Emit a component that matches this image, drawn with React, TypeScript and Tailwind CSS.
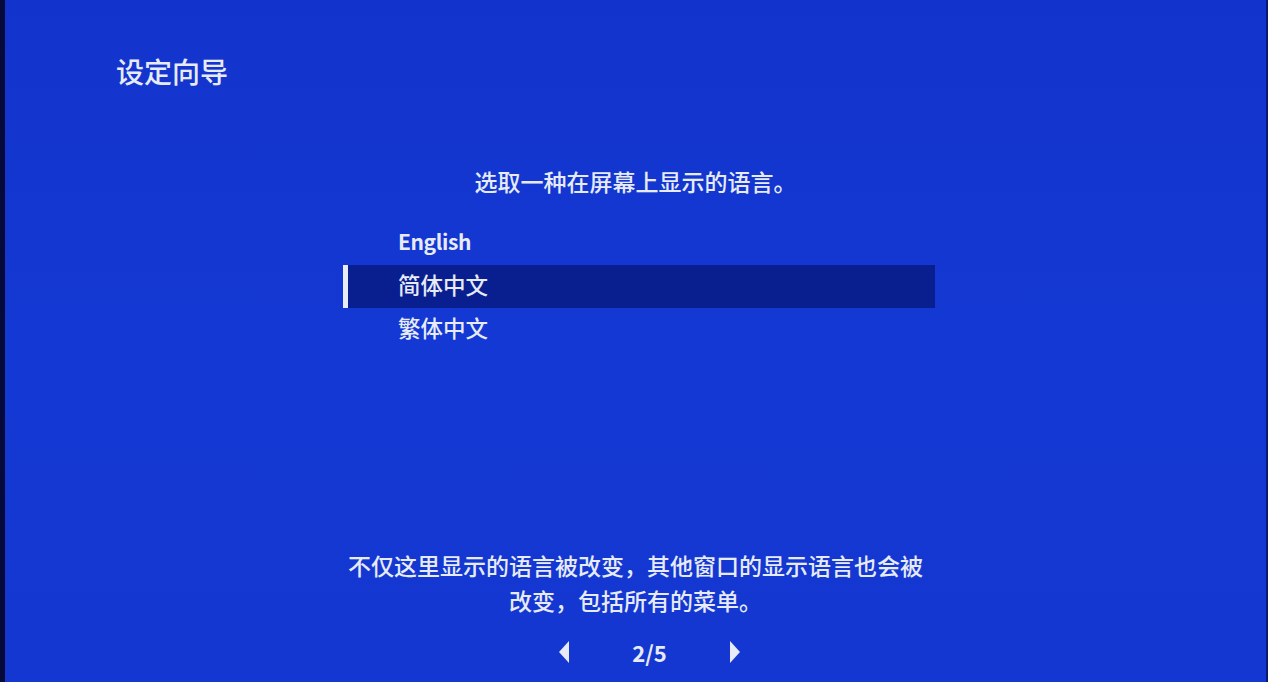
import React from "react";

const font = { fontFamily: '"Noto Sans CJK SC", "Noto Sans", sans-serif' };

const languages = ["English", "简体中文", "繁体中文"];

export default function App() {
  const selected = 1;
  return (
    <div className="flex h-[682px] w-[1268px] overflow-hidden bg-[#1336d2]" style={font}>
      <div className="w-[5px] shrink-0 bg-[#050a3a]" />
      <div className="relative flex flex-1 flex-col bg-gradient-to-b from-[#1334cc] via-[#1438d3] to-[#1437d1] text-[#e6ebf7]">
        <div className="pl-[111px] pt-[53px] text-[28px] leading-[36px] font-medium">设定向导</div>

        <div className="mt-[77px] text-center text-[23px] leading-[30px] font-medium">
          选取一种在屏幕上显示的语言。
        </div>

        <div className="mt-[26px] flex flex-col pl-[338px]">
          {languages.map((l, i) => (
            <div
              key={l}
              className={
                i === selected
                  ? "flex h-[43px] w-[592px] items-center border-l-[5px] border-[#e8ecf7] bg-[#0a1f8f] pb-[4px] pl-[50px] text-[22.5px] font-medium"
                  : "flex h-[43px] w-[592px] items-center pb-[4px] pl-[55px] text-[22.5px] font-medium"
              }
            >
              <span className={i === 0 ? "text-[21px] font-semibold tracking-[-0.4px]" : ""}>{l}</span>
            </div>
          ))}
        </div>

        <div className="mt-auto mb-[16px] flex flex-col items-center">
          <div className="text-center text-[23px] leading-[35px] font-medium">
            不仅这里显示的语言被改变，其他窗口的显示语言也会被
            <br />
            改变，包括所有的菜单。
          </div>
          <div className="mt-[20px] flex items-center gap-[62px] pl-[28px]">
            <svg width="12" height="22" viewBox="0 0 12 22">
              <polygon points="11,0 11,22 1,11" fill="#e6ebf7" />
            </svg>
            <span className="text-[22px] font-semibold leading-[28px]">2/5</span>
            <svg width="12" height="22" viewBox="0 0 12 22">
              <polygon points="1,0 1,22 11,11" fill="#e6ebf7" />
            </svg>
          </div>
        </div>
      </div>
      <div className="w-[2px] shrink-0 bg-[#0a1a70]" />
    </div>
  );
}
